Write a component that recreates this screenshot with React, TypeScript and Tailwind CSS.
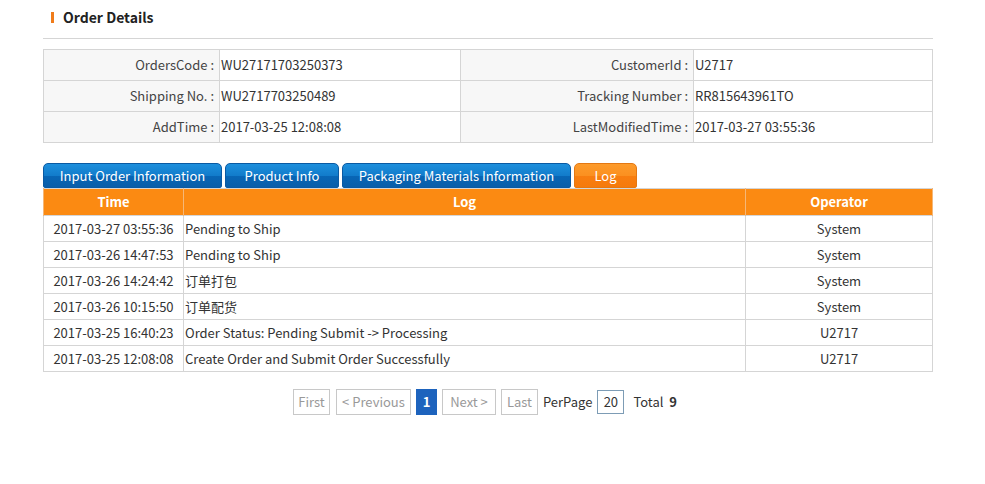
import React from 'react';

const font = { fontFamily: '"Noto Sans CJK SC", "Noto Sans", sans-serif' };

const infoRows = [
  ['OrdersCode', 'WU27171703250373', 'CustomerId', 'U2717'],
  ['Shipping No.', 'WU2717703250489', 'Tracking Number', 'RR815643961TO'],
  ['AddTime', '2017-03-25 12:08:08', 'LastModifiedTime', '2017-03-27 03:55:36'],
];

const logs = [
  ['2017-03-27 03:55:36', 'Pending to Ship', 'System'],
  ['2017-03-26 14:47:53', 'Pending to Ship', 'System'],
  ['2017-03-26 14:24:42', '订单打包', 'System'],
  ['2017-03-26 10:15:50', '订单配货', 'System'],
  ['2017-03-25 16:40:23', 'Order Status: Pending Submit -> Processing', 'U2717'],
  ['2017-03-25 12:08:08', 'Create Order and Submit Order Successfully', 'U2717'],
];

const tabs = [
  { label: 'Input Order Information', w: 'w-[179px]' },
  { label: 'Product Info', w: 'w-[114px]' },
  { label: 'Packaging Materials Information', w: 'w-[229px]' },
];

export default function App() {
  return (
    <div className="w-[985px] h-[484px] bg-white text-[13px] text-[#333]" style={font}>
      <div className="ml-[43px] w-[890px]">
        <div className="h-[39px] flex items-center pl-[8px] border-b border-[#d5d5d5] pb-[4px]">
          <span className="w-[3px] h-[11px] bg-[#f07c1b] mr-[9px]" />
          <h1 className="text-[14px] font-bold text-[#222]">Order Details</h1>
        </div>

        <table className="mt-[10px] w-full border-collapse border border-[#d5d5d5]">
          <tbody>
            {infoRows.map((r) => (
              <tr key={r[0]} className="h-[31px]">
                <td className="w-[176px] bg-[#f7f7f7] border border-[#d5d5d5] text-right pr-[5px] text-[#444]">{r[0]} :</td>
                <td className="w-[241px] border border-[#d5d5d5] pl-[1px]">{r[1]}</td>
                <td className="w-[233px] bg-[#f7f7f7] border border-[#d5d5d5] text-right pr-[5px] text-[#444]">{r[2]} :</td>
                <td className="border border-[#d5d5d5] pl-[1px]">{r[3]}</td>
              </tr>
            ))}
          </tbody>
        </table>

        <div className="mt-[20px] flex items-end gap-[3px] h-[25px]">
          {tabs.map((t) => (
            <div
              key={t.label}
              className={`${t.w} h-[25px] rounded-t-[5px] rounded-b-[2px] flex items-center justify-center text-white text-[13px] bg-[linear-gradient(#1d8fdc_0%,#127ccb_50%,#0866b6_52%,#0a5ea9_100%)] border border-[#0a5aa3]`}
            >
              {t.label}
            </div>
          ))}
          <div className="w-[63px] h-[25px] rounded-t-[5px] rounded-b-[2px] flex items-center justify-center text-white text-[13px] bg-[linear-gradient(#fd9b2b_0%,#fb9020_50%,#f87e10_52%,#f67a0c_100%)] border border-[#e47812]">
            Log
          </div>
        </div>

        <table className="w-full border-collapse border border-[#d5d5d5]">
          <thead>
            <tr className="h-[27px] bg-[#fb8a12] text-white font-bold">
              <th className="w-[140px] border-x border-[#f5b777]">Time</th>
              <th className="w-[562px] border-x border-[#f5b777]">Log</th>
              <th className="border-x border-[#f5b777]">Operator</th>
            </tr>
          </thead>
          <tbody>
            {logs.map((l) => (
              <tr key={l[0]} className="h-[26px]">
                <td className="border border-[#d5d5d5] text-center">{l[0]}</td>
                <td className="border border-[#d5d5d5] pl-[1px]">{l[1]}</td>
                <td className="border border-[#d5d5d5] text-center">{l[2]}</td>
              </tr>
            ))}
          </tbody>
        </table>

        <div className="mt-[17px] flex items-center justify-center gap-[5px] pr-[6px]">
          <span className="h-[26px] w-[37px] flex items-center justify-center border border-[#c8c8c8] text-[#999]">First</span>
          <span className="ml-[1px] h-[26px] w-[75px] flex items-center justify-center border border-[#c8c8c8] text-[#999]">&lt; Previous</span>
          <span className="h-[26px] w-[21px] flex items-center justify-center bg-[#1d63bd] text-white font-bold border border-[#1d63bd]">1</span>
          <span className="h-[26px] w-[54px] flex items-center justify-center border border-[#c8c8c8] text-[#999]">Next &gt;</span>
          <span className="h-[26px] w-[37px] flex items-center justify-center border border-[#c8c8c8] text-[#999]">Last</span>
          <span className="text-[#333]">PerPage</span>
          <span className="h-[24px] w-[27px] flex items-center justify-center border border-[#7d9cb5] text-[#333]">20</span>
          <span className="ml-[4px] text-[#333]">Total <b className="ml-[3px]">9</b></span>
        </div>
      </div>
    </div>
  );
}
